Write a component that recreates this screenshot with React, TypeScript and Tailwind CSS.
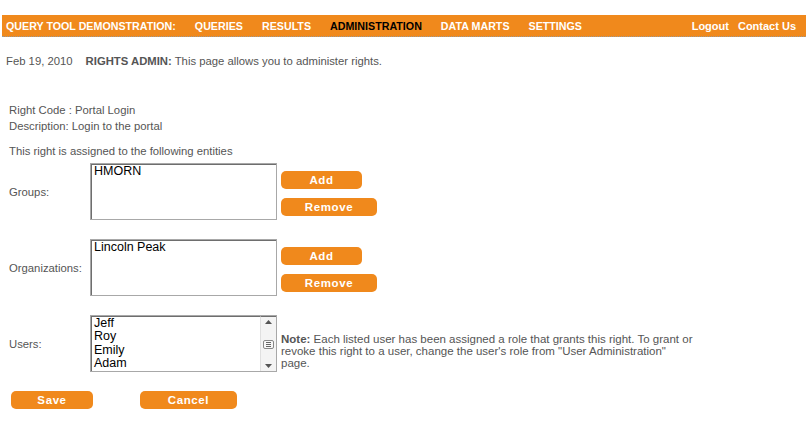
import React from "react";

const Btn = ({ label, w }: { label: string; w: string }) => (
  <button
    className={`${w} h-[18px] rounded-[5px] bg-[#f0891c] text-white font-bold text-[11.5px] leading-[18px] tracking-[0.6px] text-center`}
  >
    {label}
  </button>
);

const ListBox = ({ children, scroll }: { children: React.ReactNode; scroll?: boolean }) => (
  <div className="w-[187px] h-[57px] border border-[#a8a8a8] bg-white flex shrink-0">
    <div className="flex-1 border-l border-t border-[#6e6e6e] px-[2px] text-[12.5px] leading-[13.3px] text-black overflow-hidden">
      {children}
    </div>
    {scroll && (
      <div className="w-[16px] border-t border-[#6e6e6e] bg-[#f4f4f4] flex flex-col items-center justify-between py-[3px] border-l border-l-[#e0e0e0]">
        <svg width="7" height="4" viewBox="0 0 7 4"><path d="M0 4 L3.5 0 L7 4 Z" fill="#555" /></svg>
        <div className="w-[11px] h-[9px] border border-[#888] rounded-[2px] bg-[#f8f8f8] flex flex-col justify-center items-center gap-[1px]">
          <div className="w-[5px] h-px bg-[#666]" />
          <div className="w-[5px] h-px bg-[#666]" />
          <div className="w-[5px] h-px bg-[#666]" />
        </div>
        <svg width="7" height="4" viewBox="0 0 7 4"><path d="M0 0 L3.5 4 L7 0 Z" fill="#555" /></svg>
      </div>
    )}
  </div>
);

export default function App() {
  return (
    <div
      className="w-[809px] h-[429px] bg-white text-[#555] text-[11.3px] leading-[16px] pt-[15px]"
      style={{ fontFamily: '"Liberation Sans", Arial, sans-serif' }}
    >
      <div className="mx-[2px] w-[804px] h-[22px] bg-[#f0891c] border-b border-dotted border-[#9a9a9a] flex items-center pl-[4px] pr-[10px] text-[10.7px] font-bold text-white">
        <div className="flex items-center gap-[19px]">
          <span>QUERY TOOL DEMONSTRATION:</span>
          <span>QUERIES</span>
          <span>RESULTS</span>
          <span className="text-black">ADMINISTRATION</span>
          <span>DATA MARTS</span>
          <span>SETTINGS</span>
        </div>
        <div className="ml-auto flex items-center gap-[9px] text-[11px]">
          <span>Logout</span>
          <span>Contact Us</span>
        </div>
      </div>

      <div className="pl-[6px] mt-[16px]">
        Feb 19, 2010<span className="ml-[13px] font-bold">RIGHTS ADMIN:</span> This page allows you to administer rights.
      </div>

      <div className="pl-[9px]">
        <div className="mt-[33px]">Right Code : Portal Login</div>
        <div>Description: Login to the portal</div>
        <div className="mt-[9px]">This right is assigned to the following entities</div>

        <div className="mt-[4px] flex items-center">
          <div className="w-[81px]">Groups:</div>
          <ListBox>
            <div>HMORN</div>
          </ListBox>
          <div className="ml-[4px] flex flex-col gap-[9px] mt-[4px]">
            <Btn label="Add" w="w-[81px]" />
            <Btn label="Remove" w="w-[96px]" />
          </div>
        </div>

        <div className="mt-[19px] flex items-center">
          <div className="w-[81px]">Organizations:</div>
          <ListBox>
            <div>Lincoln Peak</div>
          </ListBox>
          <div className="ml-[4px] flex flex-col gap-[9px] mt-[4px]">
            <Btn label="Add" w="w-[81px]" />
            <Btn label="Remove" w="w-[96px]" />
          </div>
        </div>

        <div className="mt-[19px] flex items-center">
          <div className="w-[81px]">Users:</div>
          <ListBox scroll>
            <div>Jeff</div>
            <div>Roy</div>
            <div>Emily</div>
            <div>Adam</div>
          </ListBox>
          <div className="ml-[4px] self-end mb-[3px] leading-[12px] text-[11.5px] whitespace-nowrap">
            <span className="font-bold">Note:</span> Each listed user has been assigned a role that grants this right. To grant or
            <br />
            revoke this right to a user, change the user's role from "User Administration"
            <br />
            page.
          </div>
        </div>

        <div className="mt-[19px] flex items-center pl-[2px]">
          <Btn label="Save" w="w-[82px]" />
          <div className="ml-[47px]">
            <Btn label="Cancel" w="w-[97px]" />
          </div>
        </div>
      </div>
    </div>
  );
}
